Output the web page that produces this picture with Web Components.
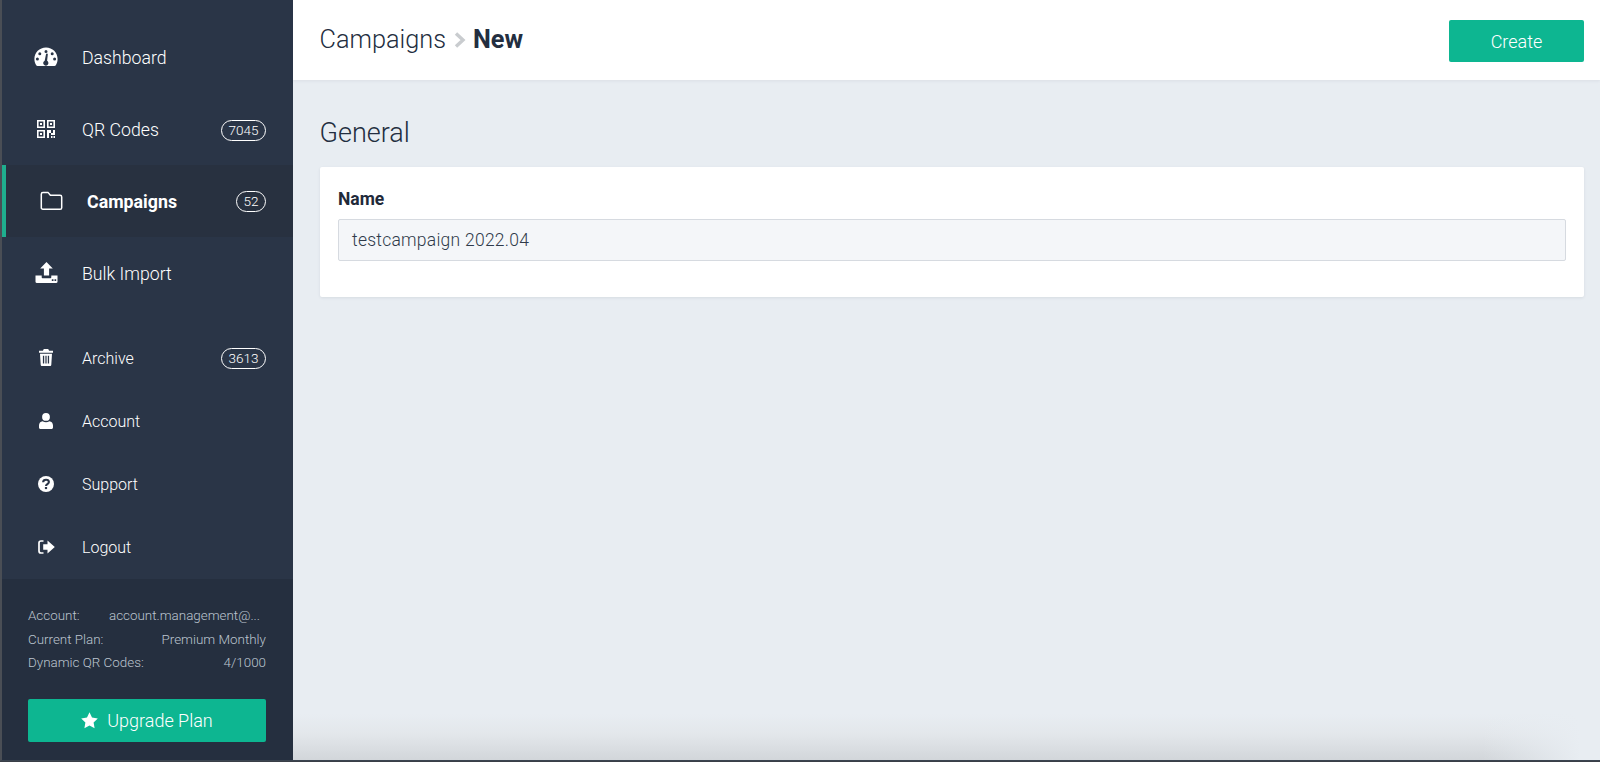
<!DOCTYPE html>
<html lang="en"><head><meta charset="utf-8"><title>Campaigns</title>
<style>
html,body{margin:0;height:100%;overflow:hidden}
body{font-family:Roboto,"Liberation Sans",sans-serif;background:#3a3f47}
</style></head><body>
<app-shell>
  <side-bar slot="side">
    <nav-item slot="top" label="Dashboard"><svg slot="icon" width="24" height="20" viewBox="0 0 24 20"><path fill="#fff" fill-rule="evenodd" d="M12 .5C5.500.5.400 5.600.400 12c0 2.300.6 4.400 1.800 6.300.3.500.8.700 1.300.700h17c.5 0 1-.2 1.300-.7 1.200-1.900 1.800-4 1.800-6.300C23.600 5.600 18.500.5 12 .5zM12 3a1.500 1.500 0 1 1 0 3 1.500 1.500 0 0 1 0-3zM5.800 5.300a1.500 1.500 0 1 1 0 3 1.500 1.500 0 0 1 0-3zM18.200 5.300a1.500 1.500 0 1 1 0 3 1.500 1.500 0 0 1 0-3zM3.400 10.500a1.500 1.500 0 1 1 0 3 1.500 1.500 0 0 1 0-3zM20.600 10.500a1.500 1.500 0 1 1 0 3 1.500 1.500 0 0 1 0-3zM13.800 7.500l-.7 6.300a2.600 2.600 0 1 1-2.400-.1l1.300-6.400a.9.900 0 0 1 1.800.200z"/></svg></nav-item>
    <nav-item slot="top" label="QR Codes" count="7045"><svg slot="icon" width="20" height="20" viewBox="0 0 20 20"><path fill="#fff" fill-rule="evenodd" d="M1 1h8v8H1zM2.600 2.600v4.800h4.800V2.600zM4 4h2v2H4zM11 1h8v8h-8zM12.600 2.600v4.800h4.800V2.600zM14 4h2v2h-2zM1 11h8v8H1zM2.600 12.600v4.800h4.800v-4.800zM4 14h2v2H4zM11 11h4v3h2v-3h2v5h-4v-2h-2v5h-2zM15 17h1.500v2H15zM17.500 17H19v2h-1.500z"/></svg></nav-item>
    <nav-item slot="top" label="Campaigns" count="52" active><svg slot="icon" width="23" height="20" viewBox="0 0 23 20"><path fill="none" stroke="#fff" stroke-width="1.500" stroke-linejoin="round" d="M1.300 3.200c0-.9.700-1.600 1.600-1.600h5.300l2.200 2.700h9.700c.9 0 1.600.7 1.600 1.600v10.800c0 .9-.7 1.600-1.600 1.600H2.900c-.9 0-1.600-.7-1.600-1.600z"/></svg></nav-item>
    <nav-item slot="top" label="Bulk Import"><svg slot="icon" width="23" height="22" viewBox="0 0 23 22"><path fill="#fff" fill-rule="evenodd" d="M11.500 0l6.300 6.600h-3.700v6.900H8.900V6.600H5.200zM.5 13.500h6.200v1.700c0 .7.500 1.100 1.100 1.100h7.400c.6 0 1.100-.4 1.100-1.100v-1.700h6.200v6.300c0 .7-.5 1.200-1.100 1.200H1.600c-.6 0-1.100-.5-1.100-1.200zM16.800 17.300v1.700h1.700v-1.700zM19.500 17.300v1.700h1.700v-1.700z"/></svg></nav-item>
    <nav-item slot="bottom" small label="Archive" count="3613"><svg slot="icon" width="14" height="17" viewBox="0 0 14 17"><path fill="#fff" fill-rule="evenodd" d="M4.800 0h4.400l.9 1.800H14v1.900H0V1.800h3.900zM1 4.700h12l-.7 11c0 .7-.6 1.300-1.300 1.300H3c-.7 0-1.300-.6-1.300-1.300zM3.900 6.800v7.700h1.300V6.800zM6.400 6.800v7.700h1.200V6.800zM8.800 6.800v7.700h1.300V6.800z"/></svg></nav-item>
    <nav-item slot="bottom" small label="Account"><svg slot="icon" width="14" height="16" viewBox="0 0 14 16"><path fill="#fff" d="M7 0a3.900 3.900 0 1 1 0 7.800A3.900 3.900 0 0 1 7 0zM3.600 8.200c1 .7 2.100 1 3.400 1s2.400-.3 3.400-1C12.600 8.500 14 10.100 14 12.500v2c0 .9-.7 1.500-1.500 1.500h-11C.7 16 0 15.400 0 14.500v-2c0-2.400 1.400-4 3.600-4.300z"/></svg></nav-item>
    <nav-item slot="bottom" small label="Support"><svg slot="icon" width="16" height="16" viewBox="0 0 16 16"><circle cx="8" cy="8" r="8" fill="#fff"/><path fill="none" stroke="#2a3547" stroke-width="2.100" d="M5.100 6.200C5.200 4.600 6.400 3.700 8 3.700c1.700 0 2.900 1 2.900 2.300 0 2.200-2.900 2-2.900 4.100"/><rect x="6.900" y="11" width="2.200" height="2.100" fill="#2a3547"/></svg></nav-item>
    <nav-item slot="bottom" small label="Logout"><svg slot="icon" width="17" height="14" viewBox="0 0 17 14"><path fill="#fff" d="M9.500.6L16.800 7l-7.300 6.400V9.800H5.200V4.200h4.300z"/><path fill="none" stroke="#fff" stroke-width="1.700" d="M5.500 1H3C1.800 1 1 1.800 1 3v8c0 1.200.8 2 2 2h2.500"/></svg></nav-item>
    <plan-info slot="footer"></plan-info>
  </side-bar>
  <page-header slot="head"></page-header>
  <general-form slot="main"></general-form>
</app-shell>
<script>
function def(name,css,html){
  customElements.define(name,class extends HTMLElement{
    connectedCallback(){
      if(this.shadowRoot)return;
      const r=this.attachShadow({mode:'open'});
      r.innerHTML='<style>'+css+'</style>'+html;
    }
  });
}
def('app-shell',`
:host{display:flex;height:761px;box-sizing:border-box;border-left:2px solid #4a4e55;border-bottom:1px solid #3b4450;overflow:hidden}
.side{display:block;flex:0 0 291px;width:291px}
.right{flex:1;display:flex;flex-direction:column;min-width:0;
 background:linear-gradient(to right,rgba(232,237,242,0) 91%,#e8edf2 98.500%),linear-gradient(to bottom,#e8edf2 0,#e8edf2 calc(100% - 46px),#e3e7eb calc(100% - 26px),#d2d6da 100%)}
`,`<div class="side"><slot name="side"></slot></div><div class="right"><slot name="head"></slot><slot name="main"></slot></div>`);

def('side-bar',`
:host{display:flex;flex-direction:column;height:100%;background:#2a3547;color:#fff}
.top{padding-top:21px;display:flex;flex-direction:column}
.bottom{padding-top:17px;display:flex;flex-direction:column}
.foot{margin-top:auto}
`,`<div class="top"><slot name="top"></slot></div><div class="bottom"><slot name="bottom"></slot></div><div class="foot"><slot name="footer"></slot></div>`);

customElements.define('nav-item',class extends HTMLElement{
  connectedCallback(){
    if(this.shadowRoot)return;
    const r=this.attachShadow({mode:'open'});
    const c=this.getAttribute('count');
    r.innerHTML=`<style>
:host{display:flex;align-items:center;box-sizing:border-box;height:72px;padding:0 27px 0 29px;font:300 17.700px Roboto,"Liberation Sans",sans-serif;color:#fff}
:host([small]){height:63px;font-size:16px;font-weight:300}
:host([active]){background:#283140;border-left:4px solid #1fae8e;padding-left:33px;font-weight:700;font-size:17.800px}
.ic{flex:0 0 30px;width:30px;display:flex;justify-content:center;align-items:center;margin-right:21px}
:host([active]) .ic{flex-basis:24px;width:24px;margin-right:24px}
.lb{flex:1;white-space:nowrap;padding-top:2px}
.ct{box-sizing:border-box;height:21px;margin-top:2px;border:1.300px solid #fff;border-radius:11px;padding:0 6.500px;font:300 13.500px/18.500px Roboto,"Liberation Sans",sans-serif}
:host([active]) .lb{padding-top:0}
:host([active]) .ct{margin-top:0}
</style><span class="ic"><slot name="icon"></slot></span><span class="lb">${this.getAttribute('label')}</span>${c?`<span class="ct">${c}</span>`:''}`;
  }
});

def('plan-info',`
:host{display:block;background:#252f3f;padding:25px 27px 18px 26px;height:181px;box-sizing:border-box;color:#bcc5cf;font:300 13.400px/23.500px Roboto,"Liberation Sans",sans-serif}
.row{display:flex;justify-content:space-between;white-space:nowrap}
.btn{box-sizing:border-box;margin-top:24px;height:43px;background:#0db691;border-radius:2px;color:#fff;font:300 18px/43px Roboto,"Liberation Sans",sans-serif;display:flex;align-items:center;justify-content:center;gap:9px}
`,`<div class="row"><span>Account:</span><span style="padding-right:6px">account.management@...</span></div>
<div class="row"><span>Current Plan:</span><span>Premium Monthly</span></div>
<div class="row"><span>Dynamic QR Codes:</span><span>4/1000</span></div>
<div class="btn"><svg width="17" height="17" viewBox="0 0 17 17"><path fill="#fff" d="M8.500.3l2.500 5.300 5.800.8-4.200 4 1 5.800-5.100-2.800-5.100 2.800 1-5.800-4.200-4 5.800-.8z"/></svg><span>Upgrade Plan</span></div>`);

def('page-header',`
:host{display:flex;justify-content:space-between;height:80px;box-sizing:border-box;padding:0 16px 0 26.500px;background:#fff;box-shadow:0 1px 3px rgba(60,70,90,.08);color:#232e40;font:300 25.300px Roboto,"Liberation Sans",sans-serif;flex:none;position:relative}
.crumb{display:flex;align-items:center;height:78px}
svg{margin:2px 7px 0 8px}
b{font-weight:700}
.btn{box-sizing:border-box;width:135px;height:42px;margin-top:20px;background:#0db691;border-radius:2px;color:#fff;font:300 18px/43.500px Roboto,"Liberation Sans",sans-serif;text-align:center}
`,`<div class="crumb"><span>Campaigns</span><svg width="12" height="16" viewBox="0 0 12 16"><path fill="none" stroke="#c9cccf" stroke-width="3.400" d="M2 1.500L9 8l-7 6.500"/></svg><b>New</b></div><div class="btn">Create</div>`);

def('general-form',`
:host{display:block;padding:0 16px 0 27px;color:#232e40}
h2{margin:0 0 0 -.5px;font:300 27px/32px Roboto,"Liberation Sans",sans-serif;padding-top:37px;height:50px;box-sizing:content-box}
.card{box-sizing:border-box;height:130px;background:#fff;border-radius:2px;box-shadow:0 1px 3px rgba(60,70,90,.1);padding:22px 18px 0}
label{display:block;font:700 17.500px/20px Roboto,"Liberation Sans",sans-serif;color:#1f2a3a;height:30px}
.inp{box-sizing:border-box;height:42px;background:#f4f6f9;border:1px solid #d6dae0;border-radius:2px;padding:0 13px;font:300 17.500px/40px Roboto,"Liberation Sans",sans-serif;color:#2f3a4a;letter-spacing:.25px}
`,`<h2>General</h2><div class="card"><label>Name</label><div class="inp">testcampaign 2022.04</div></div>`);
</script>
</body></html>
